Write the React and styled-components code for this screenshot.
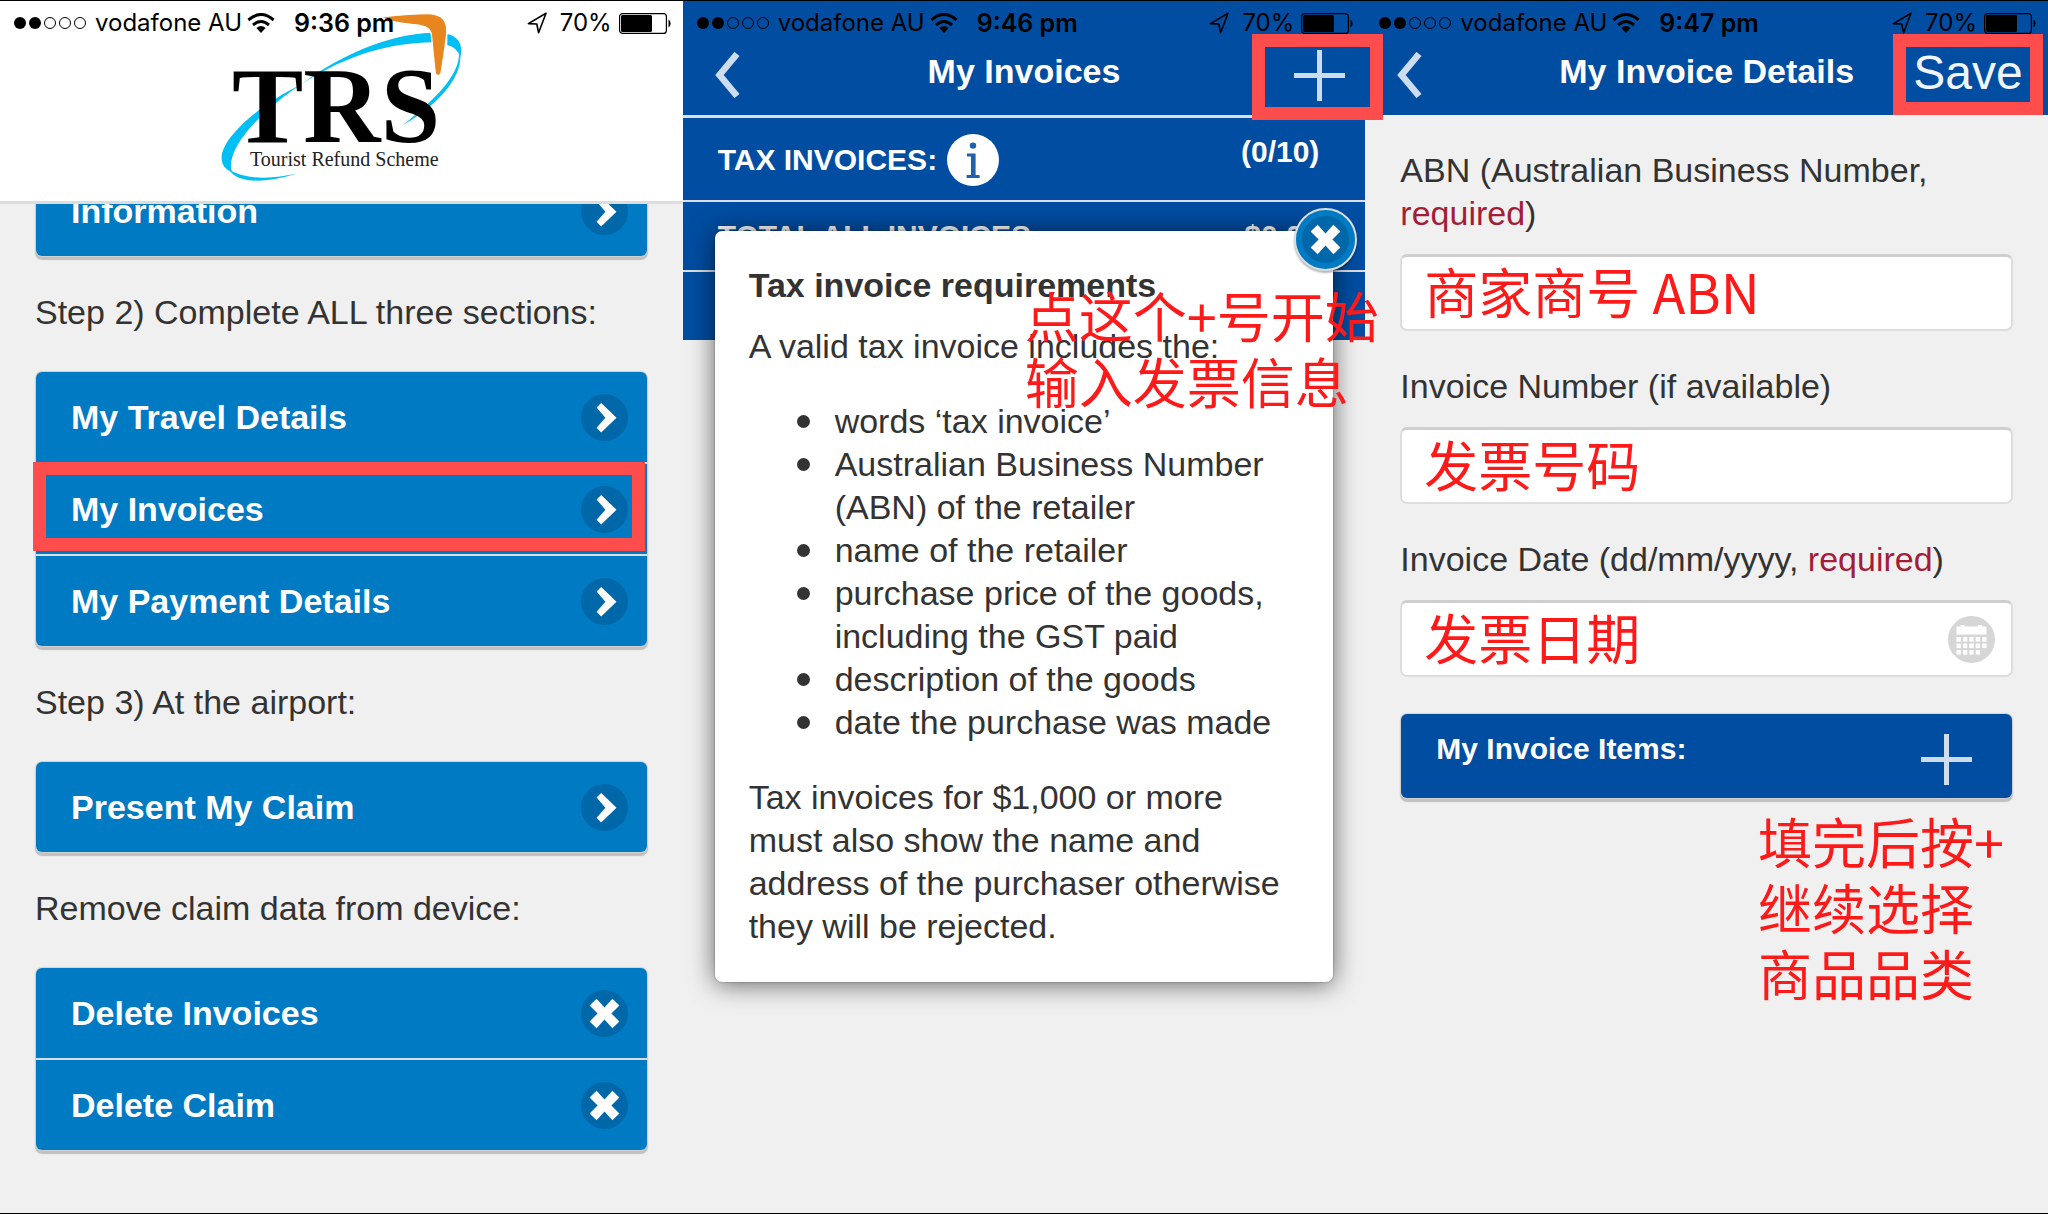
import React from "react";
import styled, { createGlobalStyle, css } from "styled-components";

const color = {
  page: "#f0f0f0",
  text: "#333333",
  navy: "#004da1",
  blue: "#007ac3",
  blueDark: "#0068a8",
  rule: "#dcdfe2",
  mark: "#ff4d4d",
  note: "#ff1a1a",
  required: "#a31d38",
  iconLight: "#cddcee",
};

const GlobalStyle = createGlobalStyle`
  * { box-sizing: border-box; }
  body {
    margin: 0;
    background: ${color.page};
    color: ${color.text};
    font-family: "Liberation Sans", Arial, "Noto Sans CJK SC", sans-serif;
    font-size: 34px;
    line-height: 43px;
  }
  button, input { font: inherit; color: inherit; margin: 0; }
  button { cursor: pointer; }
`;

const Board = styled.div`
  display: grid;
  grid-template-columns: repeat(3, minmax(0, 1fr));
  min-height: 100vh;
  border-top: 1px solid #000;
  border-bottom: 1px solid #000;
  overflow: hidden;
`;

const Screen = styled.section`
  position: relative;
  z-index: ${(p) => p.$level || 0};
  background: ${color.page};
`;

/* Status bar */

const StatusBarRow = styled.div`
  position: absolute;
  z-index: 3;
  top: 0;
  left: 0;
  right: 0;
  display: flex;
  align-items: center;
  height: 44px;
  padding: 0 12px 0 14px;
  color: #000;
  font-family: Inter, "Liberation Sans", sans-serif;
  font-size: 24px;
  line-height: 30px;
  white-space: nowrap;
`;

const Carrier = styled.span`
  margin: 0 5px 0 9px;
`;

const Clock = styled.span`
  margin-left: 19px;
  font-size: 25px;
  font-weight: 600;
`;

const StatusRight = styled.span`
  display: flex;
  align-items: center;
  margin-left: auto;
  gap: 7px;
`;

const LocationIcon = styled.svg`
  margin-right: 6px;
`;

function StatusBar({ time }) {
  return (
    <StatusBarRow>
      <svg width="72" height="12" viewBox="0 0 72 12" aria-hidden="true">
        <circle cx="6" cy="6" r="6" />
        <circle cx="21" cy="6" r="6" />
        <g fill="none" stroke="#000" strokeWidth="1">
          <circle cx="36" cy="6" r="5.5" />
          <circle cx="51" cy="6" r="5.5" />
          <circle cx="66" cy="6" r="5.5" />
        </g>
      </svg>
      <Carrier>vodafone AU</Carrier>
      <svg width="28" height="20" viewBox="0 0 28 20" aria-hidden="true">
        <g fill="none" stroke="#000" strokeWidth="3">
          <path d="M1.4 7 Q14 -4 26.6 7" />
          <path d="M6 12 Q14 5 22 12" />
        </g>
        <path d="M9.4 15 Q14 11 18.6 15 L14 20Z" />
      </svg>
      <Clock>{time}</Clock>
      <StatusRight>
        <LocationIcon width="20" height="22" viewBox="0 0 20 22" aria-hidden="true">
          <path d="M19 1.2 L1.4 11.6 L9.8 12 L11.6 20.8Z" fill="none" stroke="#000" strokeWidth="1.6" strokeLinejoin="round" />
        </LocationIcon>
        <span>70%</span>
        <svg width="52" height="21" viewBox="0 0 52 21" aria-hidden="true">
          <rect x="0.6" y="0.6" width="46.8" height="19.8" rx="3" fill="none" stroke="#000" strokeWidth="1.2" />
          <rect x="2" y="2" width="31" height="17" rx="1.5" />
          <path d="M49.5 6.5 Q51.6 7.5 51.6 10.5 Q51.6 13.5 49.5 14.5Z" />
        </svg>
      </StatusRight>
    </StatusBarRow>
  );
}

/* Home screen */

const LogoHeader = styled.header`
  position: relative;
  z-index: 2;
  display: flex;
  justify-content: center;
  height: 203px;
  padding-top: 11px;
  background: #fff;
  border-bottom: 3px solid #dddddd;
`;

function Logo() {
  return (
    <svg width="242" height="172" viewBox="0 0 242 172" role="img" aria-label="TRS Tourist Refund Scheme">
      <g transform="translate(-10 -12) scale(0.33333)">
        <g fill="#00bff5">
          <path d="M270 256 C385 166 540 102 664 98 L667 127 C550 128 410 162 270 256Z" />
          <path d="M712 102 C748 110 760 138 751 172 C744 150 730 140 712 135Z" />
          <path d="M750 160 C760 226 690 312 578 376 C650 318 742 240 747 168Z" />
          <path d="M272 254 C140 318 22 424 36 484 C40 502 52 512 66 516 C44 452 142 340 272 254Z" />
          <path d="M58 510 C84 554 182 548 262 520 C190 538 110 540 58 510Z" />
        </g>
        <path
          d="M512 51 C580 44 620 41 650 41 C702 41 713 66 710 104 C704 150 698 190 693 220 C690 229 679 229 676 220 C671 180 668 140 664 104 C661 82 642 76 604 73 C570 70 535 64 512 51Z"
          fill="#e8851e"
          stroke="#fff"
          strokeWidth="4"
        />
      </g>
      <text x="12" y="130" fontFamily="'Liberation Serif', serif" fontWeight="700" fontSize="107" fill="#000">TRS</text>
      <text x="30" y="154" fontFamily="'Liberation Serif', serif" fontSize="20" fill="#222">Tourist Refund Scheme</text>
    </svg>
  );
}

/* The list is scrolled: its first item runs up under the header. */
const HomeList = styled.main`
  padding: 0 35px 62px;
  margin-top: -38px;
`;

const StepLabel = styled.h2`
  margin: 35px 0 38px;
  font: inherit;
`;

const ButtonGroup = styled.div`
  display: flex;
  flex-direction: column;
  gap: 2px;
  margin: 0 1px;
  border-radius: 6px;
  background: ${color.rule};
  box-shadow: 0 0 1px 1px #d2d2d2, 0 3px 1px 1px rgba(0, 0, 0, 0.2);
`;

const MenuButton = styled.button`
  position: relative;
  display: flex;
  align-items: center;
  justify-content: space-between;
  height: 90px;
  padding: 0 19px 0 35px;
  border: 0;
  background: ${color.blue};
  color: #fff;
  font-weight: 700;
  text-align: left;

  &:first-child { border-radius: 6px 6px 0 0; }
  &:last-child { border-radius: 0 0 6px 6px; }
  &:only-child { border-radius: 6px; }

  ${(p) =>
    p.$marked &&
    css`
      &::after {
        content: "";
        position: absolute;
        inset: -2px 2px 3px -3px;
        border: 13px solid ${color.mark};
      }
    `}
`;

const CrossPath =
  "M15.6 8.8 L23.5 17.4 L31.4 8.8 L38.4 15.6 L30.4 23.5 L38.4 31.4 L31.4 38.2 L23.5 29.6 L15.6 38.2 L8.6 31.4 L16.6 23.5 L8.6 15.6Z";

function RoundIcon({ kind }) {
  return (
    <svg width="47" height="47" viewBox="0 0 47 47" aria-hidden="true">
      <circle cx="23.5" cy="23.5" r="23.5" fill={color.blueDark} />
      {kind === "cross" ? (
        <path d={CrossPath} fill="#fff" />
      ) : (
        <path d="M20.2 9 L35.5 23.7 L20.2 38.4 L15.6 33.8 L24.4 23.7 L15.6 13.6Z" fill="#fff" />
      )}
    </svg>
  );
}

function MenuItem({ label, kind, marked }) {
  return (
    <MenuButton type="button" $marked={marked}>
      {label}
      <RoundIcon kind={kind} />
    </MenuButton>
  );
}

/* Navy title bars */

const TitleBar = styled.header`
  position: relative;
  z-index: 2;
  display: grid;
  grid-template-columns: minmax(0, 1fr) auto minmax(0, 1fr);
  align-items: start;
  height: ${(p) => (p.$ruled ? 117 : 114)}px;
  padding-top: 33px;
  background: ${color.navy};
  color: #fff;
  border-bottom: ${(p) => (p.$ruled ? 3 : 0)}px solid ${color.rule};
`;

const Title = styled.h1`
  margin: 16px 0 0;
  font: inherit;
  font-weight: 700;
`;

const BackButton = styled.button`
  justify-self: start;
  display: flex;
  margin: 18px 0 0 32px;
  padding: 0;
  border: 0;
  background: none;
`;

function Back() {
  return (
    <BackButton type="button" aria-label="Back">
      <svg width="26" height="46" viewBox="0 0 26 46" aria-hidden="true">
        <path d="M22 2 L4.5 23 L22 44" fill="none" stroke={color.iconLight} strokeWidth="6.6" />
      </svg>
    </BackButton>
  );
}

const MarkedAdd = styled.button`
  justify-self: end;
  display: flex;
  align-items: center;
  justify-content: center;
  width: 131px;
  height: 86px;
  margin-right: -18px;
  padding: 0 0 4px 4px;
  border: 13px solid ${color.mark};
  background: ${color.navy};
`;

const MarkedSave = styled.button`
  justify-self: end;
  width: 150px;
  height: 81px;
  margin-right: 5px;
  padding: 0 0 4px;
  border: 13px solid ${color.mark};
  background: ${color.navy};
  color: #f0f5fb;
  font-size: 48px;
  line-height: 48px;
`;

const PlusIcon = () => (
  <svg width="51" height="51" viewBox="0 0 51 51" aria-hidden="true">
    <path d="M25.5 0 V51 M0 25.5 H51" stroke={color.iconLight} strokeWidth="5" />
  </svg>
);

/* Invoice totals */

const TotalRow = styled.div`
  display: flex;
  justify-content: space-between;
  align-items: flex-start;
  min-height: ${(p) => (p.$tall ? 84 : 70)}px;
  padding: 16px 46px 0 35px;
  background: ${color.navy};
  border-bottom: 2px solid ${color.rule};
  color: #fff;
  font-size: 30px;
  line-height: 36px;
  font-weight: 700;

  &:last-of-type { border-bottom-color: ${color.page}; }
`;

const TotalLabel = styled.span`
  display: flex;
  align-items: center;
  gap: 10px;
`;

const InfoButton = styled.button`
  display: flex;
  padding: 0;
  border: 0;
  background: none;
`;

const Popup = styled.div`
  position: absolute;
  z-index: 2;
  top: 230px;
  left: 32px;
  right: 32px;
  padding: 33px 34px 34px;
  border-radius: 7px;
  background: #fff;
  box-shadow: 0 0 2px rgba(0, 0, 0, 0.4), 0 2px 26px rgba(0, 0, 0, 0.6);
`;

const PopupTitle = styled.h2`
  margin: 0 0 18px;
  font: inherit;
  font-weight: 700;
`;

const PopupText = styled.p`
  margin: 0;
`;

const Requirements = styled.ul`
  margin: 32px 0;
  padding: 0 0 0 48px;
  list-style: none;
`;

const Requirement = styled.li`
  display: flex;
  gap: 25px;

  &::before {
    content: "";
    flex: none;
    width: 13px;
    height: 13px;
    margin-top: 15px;
    border-radius: 50%;
    background: ${color.text};
  }
`;

const CloseButton = styled.button`
  position: absolute;
  top: -23px;
  right: -24px;
  display: flex;
  align-items: center;
  justify-content: center;
  width: 63px;
  height: 63px;
  padding: 0;
  border: 2px solid #d8dee2;
  border-radius: 50%;
  background: ${color.blue};
  box-shadow: 0 2px 2px rgba(0, 0, 0, 0.3);
`;

const noteText = css`
  color: ${color.note};
  font-family: "Noto Sans CJK SC", sans-serif;
  font-size: 54px;
  line-height: 66px;
`;

const FloatingNote = styled.p`
  ${noteText}
  position: absolute;
  z-index: 3;
  top: 281px;
  left: 342px;
  margin: 0;
  white-space: nowrap;
`;

const Note = styled.p`
  ${noteText}
  width: 255px;
  margin: 10px 0 0 auto;
  white-space: nowrap;
`;

/* Invoice form */

const Form = styled.form`
  padding: 34px 35px;
`;

const Field = styled.div`
  margin-bottom: 34px;
`;

const Label = styled.label`
  display: block;
  margin-bottom: 19px;
`;

const Required = styled.span`
  color: ${color.required};
`;

const InputBox = styled.div`
  display: flex;
  align-items: center;
  height: 77px;
  padding: 0 16px 0 22px;
  border: 2px solid #dddddd;
  border-top: 3px solid #cfcfcf;
  border-radius: 7px;
  background: #fff;
`;

const TextInput = styled.input`
  ${noteText}
  flex: 1;
  min-width: 0;
  height: 72px;
  padding: 0 0 6px;
  border: 0;
  outline: 0;
  background: none;
`;

const CalendarButton = styled.button`
  display: flex;
  padding: 0;
  border: 0;
  background: none;
`;

function CalendarIcon() {
  const cells = [];
  [23, 29.5, 36].forEach((y, r) => {
    for (let c = 0; c < (r === 2 ? 4 : 5); c += 1) {
      cells.push(<rect key={`${r}-${c}`} x={8.5 + c * 6.4} y={y - 2} width="4.4" height="4.6" />);
    }
  });
  return (
    <svg width="47" height="47" viewBox="0 0 47 47" aria-hidden="true">
      <circle cx="23.5" cy="23.5" r="23.5" fill="#d6d6d6" />
      <g fill="#fff">
        <path d="M8.5 10.5 H12.5 V9 H16.5 V10.5 H30 V9 H34 V10.5 H38.5 V18.6 H8.5Z" />
        {cells}
      </g>
    </svg>
  );
}

const ItemsBar = styled.div`
  display: flex;
  justify-content: space-between;
  align-items: flex-start;
  height: 84px;
  margin: 37px 1px 0;
  padding: 17px 40px 0 35px;
  border-radius: 6px;
  background: ${color.navy};
  box-shadow: 0 0 1px 1px #d2d2d2, 0 3px 1px 1px rgba(0, 0, 0, 0.2);
  color: #fff;
  font-size: 30px;
  line-height: 36px;
  font-weight: 700;
`;

const AddItemButton = styled.button`
  display: flex;
  padding: 3px 0 0;
  border: 0;
  background: none;
`;

const requirements = [
  "words ‘tax invoice’",
  "Australian Business Number (ABN) of the retailer",
  "name of the retailer",
  "purchase price of the goods, including the GST paid",
  "description of the goods",
  "date the purchase was made",
];

function HomeScreen() {
  return (
    <Screen>
      <StatusBar time="9:36 pm" />
      <LogoHeader>
        <Logo />
      </LogoHeader>
      <HomeList>
        <ButtonGroup>
          <MenuItem label="Information" />
        </ButtonGroup>
        <StepLabel>Step 2) Complete ALL three sections:</StepLabel>
        <ButtonGroup>
          <MenuItem label="My Travel Details" />
          <MenuItem label="My Invoices" marked />
          <MenuItem label="My Payment Details" />
        </ButtonGroup>
        <StepLabel>Step 3) At the airport:</StepLabel>
        <ButtonGroup>
          <MenuItem label="Present My Claim" />
        </ButtonGroup>
        <StepLabel>Remove claim data from device:</StepLabel>
        <ButtonGroup>
          <MenuItem label="Delete Invoices" kind="cross" />
          <MenuItem label="Delete Claim" kind="cross" />
        </ButtonGroup>
      </HomeList>
    </Screen>
  );
}

function InvoicesScreen() {
  return (
    <Screen $level={1}>
      <StatusBar time="9:46 pm" />
      <TitleBar $ruled>
        <Back />
        <Title>My Invoices</Title>
        <MarkedAdd type="button" aria-label="Add invoice">
          <PlusIcon />
        </MarkedAdd>
      </TitleBar>
      <main>
        <TotalRow $tall>
          <TotalLabel>
            TAX INVOICES:
            <InfoButton type="button" aria-label="Tax invoice requirements">
              <svg width="52" height="52" viewBox="0 0 52 52" aria-hidden="true">
                <circle cx="26" cy="26" r="26" fill="#fff" />
                <g fill="#1f62ac">
                  <circle cx="26" cy="11.6" r="3.2" />
                  <path d="M20 19.4 H28.6 V41 H32.6 V44 H19.6 V41 H24 V22.4 H20Z" />
                </g>
              </svg>
            </InfoButton>
          </TotalLabel>
          <span>(0/10)</span>
        </TotalRow>
        <TotalRow>
          <TotalLabel>TOTAL ALL INVOICES:</TotalLabel>
          <span>$0.00</span>
        </TotalRow>
        <TotalRow />
      </main>
      <Popup role="dialog" aria-labelledby="popup-title">
        <CloseButton type="button" aria-label="Close">
          <RoundIcon kind="cross" />
        </CloseButton>
        <PopupTitle id="popup-title">Tax invoice requirements</PopupTitle>
        <PopupText>A valid tax invoice includes the:</PopupText>
        <Requirements>
          {requirements.map((item) => (
            <Requirement key={item}>{item}</Requirement>
          ))}
        </Requirements>
        <PopupText>
          Tax invoices for $1,000 or more must also show the name and address of the purchaser
          otherwise they will be rejected.
        </PopupText>
      </Popup>
      <FloatingNote>
        点这个+号开始
        <br />
        输入发票信息
      </FloatingNote>
    </Screen>
  );
}

function DetailsScreen() {
  return (
    <Screen>
      <StatusBar time="9:47 pm" />
      <TitleBar>
        <Back />
        <Title>My Invoice Details</Title>
        <MarkedSave type="button">Save</MarkedSave>
      </TitleBar>
      <Form>
        <Field>
          <Label htmlFor="abn">
            ABN (Australian Business Number, <Required>required</Required>)
          </Label>
          <InputBox>
            <TextInput id="abn" defaultValue="商家商号 ABN" />
          </InputBox>
        </Field>
        <Field>
          <Label htmlFor="number">Invoice Number (if available)</Label>
          <InputBox>
            <TextInput id="number" defaultValue="发票号码" />
          </InputBox>
        </Field>
        <Field>
          <Label htmlFor="date">
            Invoice Date (dd/mm/yyyy, <Required>required</Required>)
          </Label>
          <InputBox>
            <TextInput id="date" defaultValue="发票日期" />
            <CalendarButton type="button" aria-label="Choose date">
              <CalendarIcon />
            </CalendarButton>
          </InputBox>
        </Field>
        <ItemsBar>
          My Invoice Items:
          <AddItemButton type="button" aria-label="Add item">
            <PlusIcon />
          </AddItemButton>
        </ItemsBar>
        <Note>
          填完后按+
          <br />
          继续选择
          <br />
          商品品类
        </Note>
      </Form>
    </Screen>
  );
}

export default function App() {
  return (
    <>
      <GlobalStyle />
      <Board>
        <HomeScreen />
        <InvoicesScreen />
        <DetailsScreen />
      </Board>
    </>
  );
}
